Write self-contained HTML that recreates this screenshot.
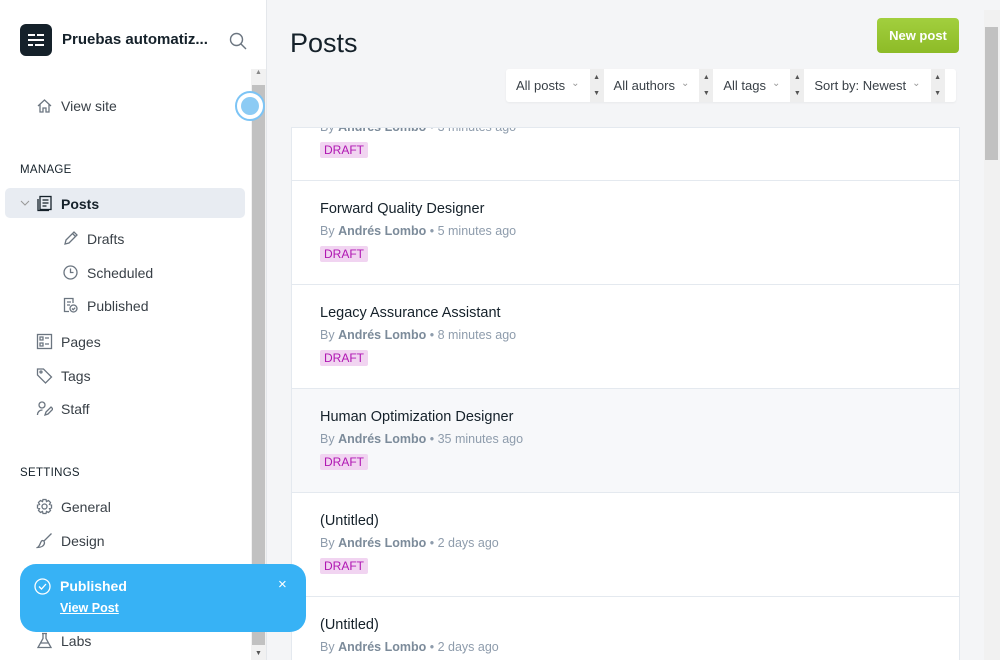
<!DOCTYPE html>
<html style="width:1000px;height:660px;overflow:hidden"><head><meta charset="utf-8"><style>
*{box-sizing:border-box;margin:0;padding:0}
body{width:1000px;height:660px;overflow:hidden;font-family:"Liberation Sans",sans-serif;background:#f4f5f7;position:relative;color:#15212a}
.side{position:absolute;left:0;top:0;width:267px;height:660px;background:#fff;border-right:1px solid #e4e7eb}
.logo{position:absolute;left:20px;top:24px;width:32px;height:32px;background:#15212a;border-radius:6px}
.logo i{position:absolute;height:2px;background:#fff}
.brand{position:absolute;left:62px;top:31px;font-weight:bold;font-size:15px;color:#15212a}
.sb{position:absolute;left:251px;top:69px;width:15px;height:591px;background:#f1f1f1}
.sb .th{position:absolute;left:1px;top:16px;width:13px;height:560px;background:#c1c1c1}
.it{position:absolute;left:36px;font-size:14px;color:#394047;display:flex;align-items:center;gap:8px}
.it svg{width:17px;height:17px;fill:none;stroke:#6b7580;stroke-width:1.3}
.sub{left:62px}
.hd{position:absolute;left:20px;font-size:11.5px;letter-spacing:.3px;color:#15212a}
.sel{position:absolute;left:5px;top:188px;width:240px;height:30px;background:#e8ecf2;border-radius:5px}
.main h1{position:absolute;left:290px;top:28px;font-size:27px;font-weight:normal;color:#15212a}
.btn{position:absolute;left:877px;top:18px;width:82px;height:35px;border-radius:4px;background:linear-gradient(#a2cf3e,#8dbb27);color:#fff;font-weight:bold;font-size:13px;text-align:center;line-height:35px}
.flt{position:absolute;left:506px;top:69px;height:33px;width:450px;background:#fff;border-radius:3px;display:flex;font-size:13px;color:#394047;box-shadow:0 1px 2px rgba(0,0,0,.05)}
.flt span{display:flex;align-items:center;padding:0 10px}
.flt span:after{content:"⌄";font-size:10px;color:#999;margin-left:6px;margin-top:-5px}
.flt b{width:14px;background:#eee;font-size:7px;color:#555;font-weight:normal;display:flex;flex-direction:column;justify-content:space-around;align-items:center}
.list{position:absolute;left:291px;top:127px;width:669px;height:533px;background:#fff;border:1px solid #e4e9ef;border-bottom:none;overflow:hidden}
.row{position:absolute;left:0;width:667px;height:104px;border-top:1px solid #e4e9ef}
.row .t{position:absolute;left:28px;top:20px;font-size:14.5px;color:#15212a}
.row .m{position:absolute;left:28px;top:43px;font-size:12.5px;color:#8e9cac}
.row .m b{color:#7c8b9a}
.dr{position:absolute;left:28px;font-size:12px;color:#b016b2;background:#f1d4f1;padding:1px 4px;border-radius:2px}
.msb{position:absolute;left:984px;top:10px;width:16px;height:650px;background:#f1f1f1}
.msb div{position:absolute;left:1px;top:17px;width:13px;height:133px;background:#c1c1c1}
.toast{position:absolute;left:20px;top:564px;width:286px;height:68px;background:#37b2f5;border-radius:16px;color:#fff}
</style></head><body>
<div class="side">
<div class="logo"><i style="left:8px;top:10px;width:7px"></i><i style="left:17px;top:10px;width:7px"></i><i style="left:8px;top:15px;width:16px"></i><i style="left:8px;top:20px;width:5px"></i><i style="left:15px;top:20px;width:9px"></i></div>
<div class="brand">Pruebas automatiz...</div>
<svg style="position:absolute;left:229px;top:32px" width="18" height="18" fill="none" stroke="#6b7580" stroke-width="1.4"><circle cx="7.5" cy="7.5" r="6"/><path d="M12 12l5 5"/></svg>
<div class="sb"><div style="font-size:7px;color:#888;text-align:center">▲</div><div class="th"></div><div style="position:absolute;bottom:3px;width:15px;font-size:7px;color:#555;text-align:center">▼</div></div>
<div style="position:absolute;left:235px;top:91px;width:30px;height:30px;border-radius:50%;border:2px solid #7cc4f5;background:#fff"><div style="position:absolute;left:4px;top:4px;width:18px;height:18px;border-radius:50%;background:#8ccbf4"></div></div>
<div class="it" style="top:97px"><svg viewBox="0 0 17 17"><path d="M2 9L8.5 3 15 9M4 7.5V15h3v-4h3v4h3V7.5"/></svg>View site</div>
<div class="hd" style="top:164px">MANAGE</div>
<div class="sel"></div>
<svg style="position:absolute;left:20px;top:199px" width="10" height="8" fill="none" stroke="#999"><path d="M1 2l4 4 4-4"/></svg>
<div class="it" style="top:195px;font-weight:bold;color:#15212a"><svg viewBox="0 0 17 17" style="stroke:#15212a"><rect x="4" y="1.5" width="11" height="13"/><path d="M2 4v11.5h11M6.5 5h6M6.5 8h6M6.5 11h4"/></svg>Posts</div>
<div class="it sub" style="top:230px"><svg viewBox="0 0 17 17"><path d="M3 14l1-4 8-8 3 3-8 8zM10.5 3.5l3 3"/></svg>Drafts</div>
<div class="it sub" style="top:264px"><svg viewBox="0 0 17 17"><circle cx="8.5" cy="8.5" r="6.5"/><path d="M8.5 4.5v4h3"/></svg>Scheduled</div>
<div class="it sub" style="top:297px"><svg viewBox="0 0 17 17"><path d="M11 6V1.5H2.5v13H7M5 5h4M5 8h3"/><circle cx="11.5" cy="11.5" r="3.5"/><path d="M10 11.5l1.2 1.2 2-2"/></svg>Published</div>
<div class="it" style="top:333px"><svg viewBox="0 0 17 17"><rect x="1.5" y="1.5" width="14" height="14"/><path d="M4 4h3v3H4zM4 10h3v3H4zM9 5h4M9 11h4"/></svg>Pages</div>
<div class="it" style="top:367px"><svg viewBox="0 0 17 17"><path d="M1.5 2v6l8 8 6-6-8-8z"/><circle cx="5" cy="5" r="1"/></svg>Tags</div>
<div class="it" style="top:400px"><svg viewBox="0 0 17 17"><circle cx="6" cy="5" r="3"/><path d="M1.5 15c0-3 2-5 5-5M9 15l1-3 5-5 2 2-5 5z"/></svg>Staff</div>
<div class="hd" style="top:467px">SETTINGS</div>
<div class="it" style="top:498px"><svg viewBox="0 0 17 17"><circle cx="8.5" cy="8.5" r="2.5"/><path d="M7 1.5h3l.5 2 2-1 2 2-1 2 2 .5v3l-2 .5 1 2-2 2-2-1-.5 2H7l-.5-2-2 1-2-2 1-2-2-.5V7l2-.5-1-2 2-2 2 1z"/></svg>General</div>
<div class="it" style="top:532px"><svg viewBox="0 0 17 17"><path d="M15.5 1.5L8 9l-1.5-.5C4 9 5 13 1.5 15.5 5 15.5 8 14 8.5 11L8 9"/></svg>Design</div>
<div class="it" style="top:632px"><svg viewBox="0 0 17 17"><path d="M6 1.5h5M7 1.5v5L2 15.5h13L10 6.5v-5M4 11h9"/></svg>Labs</div>
</div>
<div class="main">
<h1>Posts</h1>
<div class="btn">New post</div>
<div class="flt"><span>All posts</span><b><i>▲</i><i>▼</i></b><span>All authors</span><b><i>▲</i><i>▼</i></b><span>All tags</span><b><i>▲</i><i>▼</i></b><span>Sort by: Newest</span><b><i>▲</i><i>▼</i></b></div>
<div class="list">
<div class="row" style="top:-1px;border-top:none"><div class="m" style="top:-7px">By <b>Andrés Lombo</b> • 3 minutes ago</div><div class="dr" style="top:15px">DRAFT</div></div>
<div class="row" style="top:52px"><div class="t">Forward Quality Designer</div><div class="m">By <b>Andrés Lombo</b> • 5 minutes ago</div><div class="dr" style="top:65px">DRAFT</div></div>
<div class="row" style="top:156px"><div class="t">Legacy Assurance Assistant</div><div class="m">By <b>Andrés Lombo</b> • 8 minutes ago</div><div class="dr" style="top:65px">DRAFT</div></div>
<div class="row" style="top:260px;background:#f7f8fa"><div class="t">Human Optimization Designer</div><div class="m">By <b>Andrés Lombo</b> • 35 minutes ago</div><div class="dr" style="top:65px">DRAFT</div></div>
<div class="row" style="top:364px"><div class="t">(Untitled)</div><div class="m">By <b>Andrés Lombo</b> • 2 days ago</div><div class="dr" style="top:65px">DRAFT</div></div>
<div class="row" style="top:468px;height:64px"><div class="t">(Untitled)</div><div class="m">By <b>Andrés Lombo</b> • 2 days ago</div></div>
</div>
<div class="msb"><div></div></div>
</div>
<div class="toast">
<svg style="position:absolute;left:14px;top:14px" width="17" height="17" fill="none" stroke="#fff" stroke-width="1.3"><circle cx="8.5" cy="8.5" r="7.5"/><path d="M5 8.5l2.5 2.5 4.5-5"/></svg>
<div style="position:absolute;left:40px;top:14px;font-weight:bold;font-size:14px">Published</div>
<div style="position:absolute;left:40px;top:37px;font-size:12.5px;text-decoration:underline;font-weight:bold">View Post</div>
<div style="position:absolute;left:258px;top:12px;font-size:15px">×</div>
</div>
</body></html>
